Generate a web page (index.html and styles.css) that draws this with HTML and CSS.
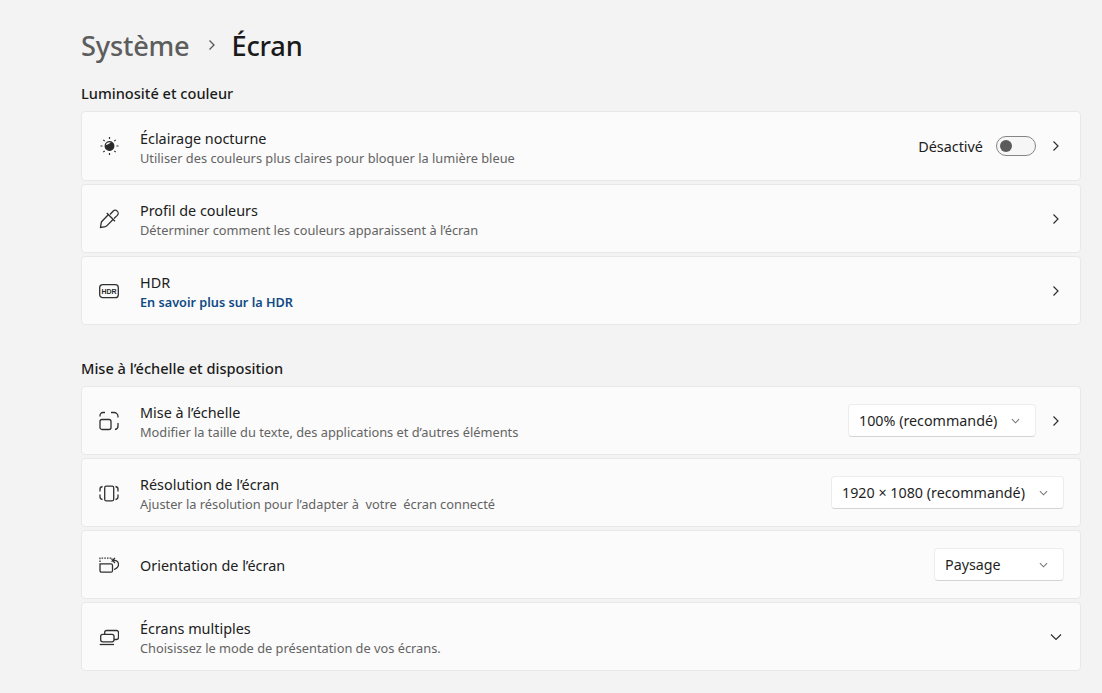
FILE: index.html
```html
<!DOCTYPE html>
<html lang="fr">
<head>
<meta charset="utf-8">
<title>Écran</title>
<link rel="stylesheet" href="styles.css">
</head>
<body>
<main class="page">
  <h1 class="crumbs">
    <span class="crumb-parent">Système</span>
    <svg class="crumb-sep" viewBox="0 0 10 12"><path d="M2.500 1.500 7 6l-4.500 4.500"/></svg>
    <span class="crumb-current">Écran</span>
  </h1>

  <h2 class="section-title first">Luminosité et couleur</h2>
  <section class="group">
    <div class="card tall">
      <svg class="icon" viewBox="0 0 20 20"><circle cx="10.500" cy="10" r="4.300"/><path class="solid" d="M6.300 9.300C8 8.800 10.500 7.800 12 6a4.300 4.300 0 1 1-5.700 3.300z"/><path class="ray" d="M10.500 1v2M10.500 17v2M1.500 10h2M17.500 10h2M4.300 3.800l1.400 1.400M15.300 14.800l1.400 1.400M4.300 16.200l1.400-1.400M15.300 5.200l1.400-1.400"/></svg>
      <div class="text"><div class="name">Éclairage nocturne</div><div class="desc">Utiliser des couleurs plus claires pour bloquer la lumière bleue</div></div>
      <div class="controls">
        <span class="state">Désactivé</span>
        <span class="toggle"><span class="knob"></span></span>
        <svg class="chev" viewBox="0 0 10 12"><path d="M2.500 1.500 7 6l-4.500 4.500"/></svg>
      </div>
    </div>
    <div class="card">
      <svg class="icon" viewBox="0 0 20 20"><path d="M9.500 5.500 2.800 12.500c-.5.6-.6 1.200-.7 2l-.6 4 4-.6c.8-.1 1.400-.3 2-.8l6.800-6.800"/><path d="m7.800 4 8.200 8.200M11 5.500l3-3.300a3 3 0 0 1 4.300 4.200L15 9.500"/></svg>
      <div class="text"><div class="name">Profil de couleurs</div><div class="desc">Déterminer comment les couleurs apparaissent à l’écran</div></div>
      <div class="controls">
        <svg class="chev" viewBox="0 0 10 12"><path d="M2.500 1.500 7 6l-4.500 4.500"/></svg>
      </div>
    </div>
    <div class="card">
      <svg class="icon" viewBox="0 0 20 20"><rect x="0.700" y="3.700" width="18.600" height="13" rx="3"/><text class="hdr-mark" x="10" y="12.800">HDR</text></svg>
      <div class="text"><div class="name">HDR</div><div class="link">En savoir plus sur la HDR</div></div>
      <div class="controls">
        <svg class="chev" viewBox="0 0 10 12"><path d="M2.500 1.500 7 6l-4.500 4.500"/></svg>
      </div>
    </div>
  </section>

  <h2 class="section-title">Mise à l’échelle et disposition</h2>
  <section class="group">
    <div class="card">
      <svg class="icon" viewBox="0 0 20 20"><rect x="1" y="8.500" width="11" height="10" rx="2"/><path d="M1 5.500v-1a3 3 0 0 1 3-3h2M12 1.500h3a4 4 0 0 1 4 4v1M19 12v3a3.500 3.500 0 0 1-3 3.500"/></svg>
      <div class="text"><div class="name">Mise à l’échelle</div><div class="desc">Modifier la taille du texte, des applications et d’autres éléments</div></div>
      <div class="controls">
        <div class="select w188"><span>100% (recommandé)</span><svg class="caret" viewBox="0 0 10 6"><path d="m1 1 4 4 4-4"/></svg></div>
        <svg class="chev" viewBox="0 0 10 12"><path d="M2.500 1.500 7 6l-4.500 4.500"/></svg>
      </div>
    </div>
    <div class="card">
      <svg class="icon" viewBox="0 0 20 20"><rect x="5.700" y="3.200" width="9" height="14.600" rx="1.500"/><path d="M3.500 3.500C2 3.800 1 4.500 1 6v2.500M1 11.500V14c0 1.500 1 2.200 2.500 2.500M16.500 3.500C18 3.800 19 4.500 19 6v2.500M19 11.500V14c0 1.500-1 2.200-2.500 2.500"/></svg>
      <div class="text"><div class="name">Résolution de l’écran</div><div class="desc">Ajuster la résolution pour l’adapter à&nbsp; votre&nbsp; écran connecté</div></div>
      <div class="controls">
        <div class="select w233"><span>1920 × 1080 (recommandé)</span><svg class="caret" viewBox="0 0 10 6"><path d="m1 1 4 4 4-4"/></svg></div>
      </div>
    </div>
    <div class="card">
      <svg class="icon" viewBox="0 0 20 20"><path d="M1 8.800h11a1.500 1.500 0 0 1 1.500 1.500v5.400a1.500 1.500 0 0 1-1.500 1.500H2.500A1.500 1.500 0 0 1 1 15.700V8.800z"/><path class="dash" d="M1 7V3.200h12V7"/><path d="M14.500 5.500c3-.3 5 1.200 5 4 0 2.200-1.500 4-4.500 5M16 3l-2.500 2.500L16 8"/></svg>
      <div class="text"><div class="name">Orientation de l’écran</div></div>
      <div class="controls">
        <div class="select w130"><span>Paysage</span><svg class="caret" viewBox="0 0 10 6"><path d="m1 1 4 4 4-4"/></svg></div>
      </div>
    </div>
    <div class="card">
      <svg class="icon" viewBox="0 0 20 20"><rect x="5.700" y="3.500" width="13.800" height="9" rx="2"/><rect class="filled" x="1.700" y="7.300" width="13.300" height="7.500" rx="2"/><path d="M0.700 17.500H15"/></svg>
      <div class="text"><div class="name">Écrans multiples</div><div class="desc">Choisissez le mode de présentation de vos écrans.</div></div>
      <div class="controls">
        <svg class="chev-down" viewBox="0 0 12 8"><path d="m1 1.500 5 5 5-5"/></svg>
      </div>
    </div>
  </section>
</main>
</body>
</html>
```
FILE: styles.css
```css
* { box-sizing: border-box; }
html, body { margin: 0; height: 100%; }
body {
  background: #f3f3f3;
  color: #1b1b1b;
  font-family: "Noto Sans", "Open Sans", sans-serif;
  overflow: hidden;
}
.page { padding: 23px 21px 0 81px; }
.crumbs {
  display: flex;
  align-items: center;
  margin: 0;
  height: 44px;
  font-size: 27.2px;
  font-weight: 500;
  letter-spacing: -0.2px;
}
.crumb-parent { color: #5d5d5d; }
.crumb-current { color: #1a1a1a; }
.crumb-sep {
  width: 10px;
  height: 12px;
  margin: 0 15px 0 17px;
  fill: none;
  stroke: #555;
  stroke-width: 1.3;
}
.section-title {
  margin: 0;
  font-size: 14.6px;
  line-height: 20px;
  font-weight: 500;
  color: #1b1b1b;
  padding: 0 0 8px;
}
.section-title.first { margin-top: 16px; }
.group + .section-title { margin-top: 33px; }
.group { display: flex; flex-direction: column; gap: 3px; }
.card {
  display: flex;
  align-items: center;
  height: 69px;
  padding: 0 16px 0 17px;
  background: #fbfbfb;
  border: 1px solid #e8e8e8;
  border-radius: 4px;
}
.card.tall { height: 70px; }
.icon {
  flex: none;
  width: 20px;
  height: 20px;
  margin-right: 21px;
  fill: none;
  stroke: #303030;
  stroke-width: 1.3;
}
.icon .solid { fill: #2a2a2a; stroke: none; }
.icon .ray { stroke-width: 1.2; }
.icon .filled { fill: #fbfbfb; }
.icon .dash { stroke-dasharray: 1.5 1.2; }
.hdr-mark {
  fill: #2a2a2a;
  stroke: none;
  font-family: "Liberation Sans", sans-serif;
  font-size: 7px;
  font-weight: 700;
  text-anchor: middle;
}
.text { flex: 1; min-width: 0; padding-top: 2px; }
.name { font-size: 14.4px; line-height: 20px; color: #202020; margin-bottom: 1px; }
.name:last-child { margin-bottom: 0; }
.desc { font-size: 12.8px; line-height: 16px; color: #636363; }
.link { font-size: 12.7px; line-height: 16px; font-weight: 600; color: #0f4a85; }
.controls { display: flex; align-items: center; }
.state { font-size: 14.4px; color: #202020; margin-right: 13px; }
.toggle {
  display: flex;
  align-items: center;
  width: 40px;
  height: 20px;
  padding-left: 3px;
  margin-right: 15px;
  border: 1px solid #858585;
  border-radius: 10px;
  background: #f6f6f6;
}
.knob { width: 12px; height: 12px; border-radius: 50%; background: #5b5b5b; }
.chev {
  width: 10px;
  height: 12px;
  margin-right: 3px;
  fill: none;
  stroke: #2e2e2e;
  stroke-width: 1.2;
}
.chev-down {
  width: 12px;
  height: 8px;
  margin-right: 2px;
  fill: none;
  stroke: #2e2e2e;
  stroke-width: 1.2;
}
.select {
  display: flex;
  align-items: center;
  justify-content: space-between;
  height: 33px;
  padding: 0 15px 0 10px;
  font-size: 14.3px;
  color: #1f1f1f;
  background: #fff;
  border: 1px solid #ececec;
  border-bottom-color: #d4d4d4;
  border-radius: 4px;
}
.w188 { width: 188px; margin-right: 15px; }
.w233 { width: 233px; }
.w130 { width: 130px; }
.caret {
  width: 9px;
  height: 6px;
  fill: none;
  stroke: #777;
  stroke-width: 1.2;
}
```
